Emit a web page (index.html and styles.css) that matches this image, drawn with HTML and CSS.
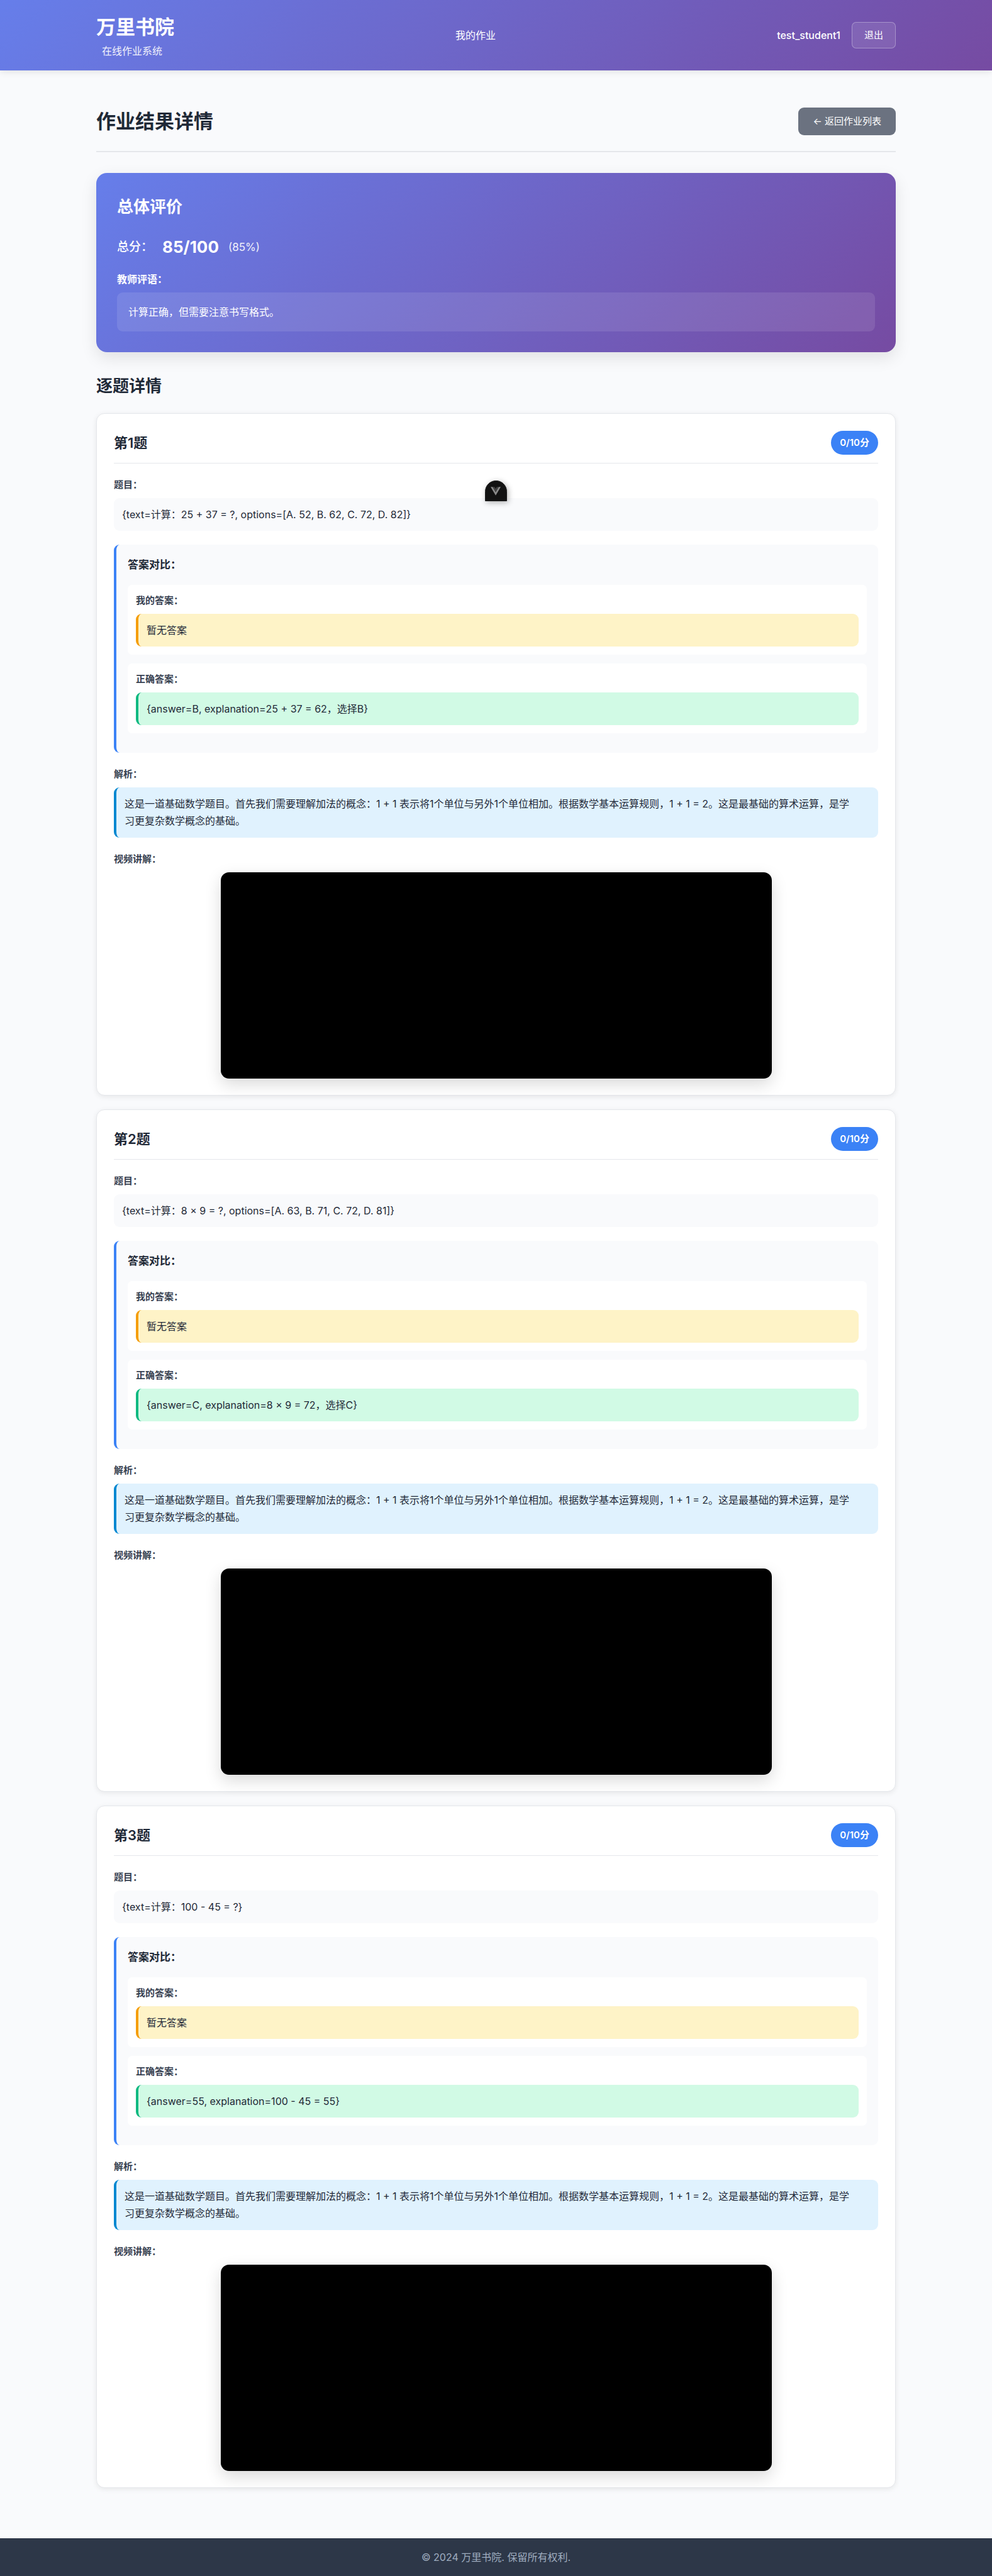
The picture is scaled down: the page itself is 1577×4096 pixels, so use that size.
FILE: index.html
```html
<!DOCTYPE html>
<html lang="zh-CN">
<head>
<meta charset="utf-8">
<meta name="viewport" content="width=device-width, initial-scale=1">
<title>作业结果详情 - 万里书院</title>
<link rel="stylesheet" href="styles.css">
</head>
<body>
<header class="site-header">
  <div class="container site-header-inner">
    <div class="brand">
      <h1 class="brand-name">万里书院</h1>
      <span class="brand-sub">在线作业系统</span>
    </div>
    <nav><a class="nav-link" href="#">我的作业</a></nav>
    <div class="user">
      <span class="user-name">test_student1</span>
      <button class="logout" type="button">退出</button>
    </div>
  </div>
</header>

<main class="container main">
  <div class="page-head">
    <h2 class="page-title">作业结果详情</h2>
    <button class="back" type="button">← 返回作业列表</button>
  </div>

  <section class="overview">
    <h3 class="overview-title">总体评价</h3>
    <div class="score-row">
      <span class="score-label">总分：</span>
      <span class="score-value">85/100</span>
      <span class="score-percent">(85%)</span>
    </div>
    <h4 class="comment-label">教师评语：</h4>
    <p class="comment">计算正确，但需要注意书写格式。</p>
  </section>

  <h3 class="section-title">逐题详情</h3>

  <div class="questions">
    <article class="card">
      <div class="card-head">
        <h4 class="card-title">第1题</h4>
        <span class="badge">0/10分</span>
      </div>
      <section class="block">
        <h5 class="label">题目：</h5>
        <p class="text-box">{text=计算：25 + 37 = ?, options=[A. 52, B. 62, C. 72, D. 82]}</p>
      </section>
      <section class="block compare">
        <h5 class="compare-title">答案对比：</h5>
        <div class="answer">
          <h6 class="label">我的答案：</h6>
          <p class="text-box mine">暂无答案</p>
        </div>
        <div class="answer">
          <h6 class="label">正确答案：</h6>
          <p class="text-box correct">{answer=B, explanation=25 + 37 = 62，选择B}</p>
        </div>
      </section>
      <section class="block">
        <h5 class="label">解析：</h5>
        <p class="text-box analysis">这是一道基础数学题目。首先我们需要理解加法的概念：1 + 1 表示将1个单位与另外1个单位相加。根据数学基本运算规则，1 + 1 = 2。这是最基础的算术运算，是学习更复杂数学概念的基础。</p>
      </section>
      <section class="block">
        <h5 class="label">视频讲解：</h5>
        <video class="video"></video>
      </section>
    </article>

    <article class="card">
      <div class="card-head">
        <h4 class="card-title">第2题</h4>
        <span class="badge">0/10分</span>
      </div>
      <section class="block">
        <h5 class="label">题目：</h5>
        <p class="text-box">{text=计算：8 × 9 = ?, options=[A. 63, B. 71, C. 72, D. 81]}</p>
      </section>
      <section class="block compare">
        <h5 class="compare-title">答案对比：</h5>
        <div class="answer">
          <h6 class="label">我的答案：</h6>
          <p class="text-box mine">暂无答案</p>
        </div>
        <div class="answer">
          <h6 class="label">正确答案：</h6>
          <p class="text-box correct">{answer=C, explanation=8 × 9 = 72，选择C}</p>
        </div>
      </section>
      <section class="block">
        <h5 class="label">解析：</h5>
        <p class="text-box analysis">这是一道基础数学题目。首先我们需要理解加法的概念：1 + 1 表示将1个单位与另外1个单位相加。根据数学基本运算规则，1 + 1 = 2。这是最基础的算术运算，是学习更复杂数学概念的基础。</p>
      </section>
      <section class="block">
        <h5 class="label">视频讲解：</h5>
        <video class="video"></video>
      </section>
    </article>

    <article class="card">
      <div class="card-head">
        <h4 class="card-title">第3题</h4>
        <span class="badge">0/10分</span>
      </div>
      <section class="block">
        <h5 class="label">题目：</h5>
        <p class="text-box">{text=计算：100 - 45 = ?}</p>
      </section>
      <section class="block compare">
        <h5 class="compare-title">答案对比：</h5>
        <div class="answer">
          <h6 class="label">我的答案：</h6>
          <p class="text-box mine">暂无答案</p>
        </div>
        <div class="answer">
          <h6 class="label">正确答案：</h6>
          <p class="text-box correct">{answer=55, explanation=100 - 45 = 55}</p>
        </div>
      </section>
      <section class="block">
        <h5 class="label">解析：</h5>
        <p class="text-box analysis">这是一道基础数学题目。首先我们需要理解加法的概念：1 + 1 表示将1个单位与另外1个单位相加。根据数学基本运算规则，1 + 1 = 2。这是最基础的算术运算，是学习更复杂数学概念的基础。</p>
      </section>
      <section class="block">
        <h5 class="label">视频讲解：</h5>
        <video class="video"></video>
      </section>
    </article>
  </div>
</main>

<footer class="site-footer">© 2024 万里书院. 保留所有权利.</footer>

<button class="devtools" type="button" aria-label="Vue DevTools">
  <svg width="16" height="14" viewBox="0 0 28 24" aria-hidden="true">
    <path fill="#8a8a8a" d="M0 0h5.600L14 14.500 22.400 0H28L14 24z"/>
    <path fill="#424242" d="M5.600 0h5.200L14 5.500 17.200 0h5.200L14 14.500z"/>
  </svg>
</button>
</body>
</html>
```
FILE: styles.css
```css
* {
  box-sizing: border-box;
  margin: 0;
  padding: 0;
}

body {
  position: relative;
  background: #f9fafc;
  color: #1f2937;
  font-family: Inter, "Noto Sans CJK SC", sans-serif;
  font-size: 16px;
  line-height: 26px;
}

button {
  border: 0;
  font: inherit;
  cursor: pointer;
}

.container {
  width: 100%;
  max-width: 1271px;
  margin: 0 auto;
}

/* Header */

.site-header {
  padding: 18px 22px;
  background: linear-gradient(135deg, #667eea 0%, #764ba2 100%);
  box-shadow: 0 2px 11px rgba(0, 0, 0, 0.1);
  color: #fff;
}

.site-header-inner {
  display: flex;
  align-items: center;
  justify-content: space-between;
}

.brand {
  display: flex;
  flex-direction: column;
}

.brand-name {
  font-size: 31px;
  font-weight: 600;
  line-height: 50px;
}

.brand-sub {
  margin-left: 9px;
  opacity: 0.9;
}

.nav-link {
  color: #fff;
  text-decoration: none;
}

.user {
  display: flex;
  align-items: center;
  gap: 18px;
}

.user-name {
  font-weight: 500;
}

.logout {
  padding: 8px 19px;
  border: 1px solid rgba(255, 255, 255, 0.3);
  border-radius: 7px;
  background: rgba(255, 255, 255, 0.1);
  color: #fff;
  font-size: 15px;
  line-height: 24px;
}

/* Page heading */

.main {
  padding: 59px 0 80px;
}

.page-head {
  display: flex;
  align-items: center;
  justify-content: space-between;
  margin-bottom: 33px;
  padding-bottom: 25px;
  border-bottom: 2px solid #e5e7eb;
}

.page-title {
  font-size: 31px;
  font-weight: 600;
  line-height: 42px;
}

.back {
  padding: 10px 23px;
  border-radius: 9px;
  background: #6b7280;
  color: #fff;
  font-size: 15px;
  line-height: 24px;
}

/* Overall result */

.overview {
  padding: 33px;
  border-radius: 17px;
  background: linear-gradient(135deg, #667eea 0%, #764ba2 100%);
  box-shadow: 0 9px 26px rgba(0, 0, 0, 0.1);
  color: #fff;
}

.overview-title,
.section-title {
  margin-bottom: 22px;
  font-size: 26px;
  font-weight: 600;
  line-height: 42px;
}

.score-row {
  display: flex;
  align-items: center;
  gap: 15px;
  line-height: 42px;
}

.score-label {
  font-size: 19px;
  font-weight: 500;
}

.score-value {
  font-size: 26px;
  font-weight: 700;
}

.score-percent {
  font-size: 17px;
  opacity: 0.9;
}

.comment-label {
  margin: 17px 0 8px;
  font-size: 16px;
  font-weight: 600;
}

.comment {
  padding: 18px;
  border-radius: 9px;
  background: rgba(255, 255, 255, 0.1);
}

.section-title {
  margin-top: 33px;
}

/* Question cards */

.questions {
  display: flex;
  flex-direction: column;
  gap: 22px;
}

.card {
  display: flex;
  flex-direction: column;
  gap: 22px;
  padding: 27px 27px 26px;
  border: 1px solid #e5e7eb;
  border-radius: 13px;
  background: #fff;
  box-shadow: 0 2px 9px rgba(0, 0, 0, 0.08);
}

.card-head {
  display: flex;
  align-items: center;
  justify-content: space-between;
  padding-bottom: 13px;
  border-bottom: 1px solid #e5e7eb;
}

.card-title {
  font-size: 22px;
  font-weight: 600;
}

.badge {
  padding: 7px 14px;
  border-radius: 22px;
  background: #3b82f6;
  color: #fff;
  font-size: 15px;
  font-weight: 600;
  line-height: 24px;
}

.label {
  margin-bottom: 9px;
  color: #374151;
  font-size: 15px;
  font-weight: 600;
  line-height: 24px;
}

.text-box {
  padding: 13px;
  border-radius: 9px;
  background: #f9fafc;
}

.compare {
  display: flex;
  flex-direction: column;
  gap: 14px;
  padding: 18px 18px 31px;
  border-left: 4px solid #3b82f6;
  border-radius: 9px;
  background: #f9fafc;
}

.compare-title {
  margin-bottom: 4px;
  font-size: 17px;
  font-weight: 600;
  line-height: 28px;
}

.answer {
  padding: 13px;
  border-radius: 7px;
  background: #fff;
}

.mine {
  border-left: 4px solid #f59e0b;
  background: #fef3c7;
}

.correct {
  border-left: 4px solid #10b981;
  background: #d1fae5;
}

.analysis {
  padding-right: 32px;
  border-left: 4px solid #0288d1;
  background: #e0f2fe;
  line-height: 27px;
}

.video {
  display: block;
  width: 100%;
  max-width: 876px;
  height: 328px;
  margin: 0 auto;
  border-radius: 13px;
  background: #000;
  box-shadow: 0 9px 26px rgba(0, 0, 0, 0.15);
}

/* Footer */

.site-footer {
  padding: 17px;
  background: #2d3748;
  color: #a0aec0;
  text-align: center;
}

/* Floating developer tools toggle */

.devtools {
  position: absolute;
  top: 764px;
  left: 50%;
  display: flex;
  align-items: center;
  justify-content: center;
  width: 35px;
  height: 33px;
  margin-left: -18px;
  border: 1px solid #1c1c1c;
  border-radius: 18px 18px 0 0;
  background: #121212;
  box-shadow: 2px 2px 10px rgba(0, 0, 0, 0.3);
}
```
